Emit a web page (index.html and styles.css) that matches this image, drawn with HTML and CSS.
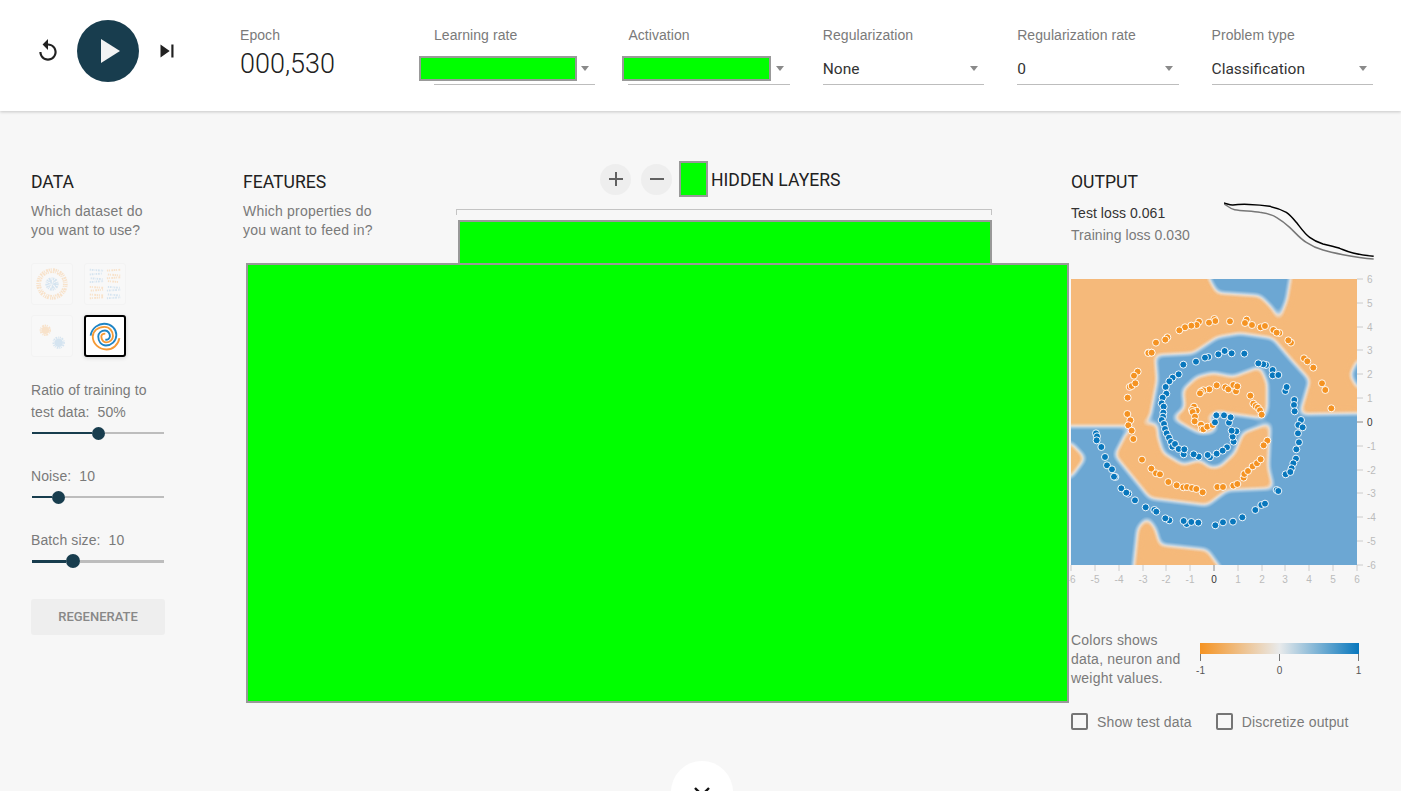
FILE: index.html
```html
<!DOCTYPE html>
<html lang="en">
<head>
<meta charset="utf-8">
<title>Tensorflow Playground</title>
<link rel="stylesheet" href="styles.css">
</head>
<body>
<header class="topbar">
  <div class="player">
    <svg class="icon-26" viewBox="0 0 24 24"><path d="M12 5V1L7 6l5 5V7c3.31 0 6 2.69 6 6s-2.69 6-6 6-6-2.69-6-6H4c0 4.42 3.58 8 8 8s8-3.58 8-8-3.58-8-8-8z"/></svg>
    <div class="play"><svg class="play-glyph" viewBox="0 0 19 24"><path d="M0 0v24l19-12z"/></svg></div>
    <svg class="icon-26" viewBox="0 0 24 24"><path d="M6 18l8.5-6L6 6v12zM16 6v12h2V6h-2z"/></svg>
  </div>
  <div class="epoch">
    <div class="label">Epoch</div>
    <div class="epoch-value">000,530</div>
  </div>
  <div class="selects">
    <div class="sel">
      <div class="label">Learning rate</div>
      <div class="sel-box"><div class="missing missing-lr"></div><span class="caret"></span></div>
    </div>
    <div class="sel">
      <div class="label">Activation</div>
      <div class="sel-box"><div class="missing missing-act"></div><span class="caret"></span></div>
    </div>
    <div class="sel">
      <div class="label">Regularization</div>
      <div class="sel-box"><span class="sel-text">None</span><span class="caret"></span></div>
    </div>
    <div class="sel">
      <div class="label">Regularization rate</div>
      <div class="sel-box"><span class="sel-text">0</span><span class="caret"></span></div>
    </div>
    <div class="sel">
      <div class="label">Problem type</div>
      <div class="sel-box"><span class="sel-text">Classification</span><span class="caret"></span></div>
    </div>
  </div>
</header>

<main class="content">
  <section class="col-data">
    <h2 class="heading">DATA</h2>
    <p class="note">Which dataset do<br>you want to use?</p>
    <div class="thumbs">
      <div class="thumb"><svg class="thumb-svg" viewBox="0 0 42 42">
        <circle class="speck-o" cx="21" cy="21" r="15" stroke-width="3"/>
        <circle class="speck-o" cx="21" cy="21" r="12.5" stroke-width="2"/>
        <circle class="speck-b" cx="21" cy="21" r="5.5" stroke-width="3"/>
        <circle class="speck-b" cx="21" cy="21" r="2.5" stroke-width="4"/>
      </svg></div>
      <div class="thumb"><svg class="thumb-svg" viewBox="0 0 42 42">
        <path class="speck-b" stroke-width="2" d="M5 6l14 1M5 11l13-1M6 15l13 1M5 19l14-1"/>
        <path class="speck-o" stroke-width="2" d="M23 7l14-1M24 11l13 1M23 15l14-1M24 18l12 1"/>
        <path class="speck-o" stroke-width="2" d="M5 24l14 1M6 28l13-1M5 32l14 1M5 36l14-1"/>
        <path class="speck-b" stroke-width="2" d="M24 24l13 1M23 28l14-1M24 32l13 1M23 36l14-1"/>
      </svg></div>
      <div class="thumb"><svg class="thumb-svg" viewBox="0 0 42 42">
        <circle class="blob-o" cx="14" cy="15" r="4"/>
        <circle class="speck-o" cx="14" cy="15" r="5" stroke-width="2"/>
        <circle class="blob-b" cx="28" cy="28" r="4.5"/>
        <circle class="speck-b" cx="28" cy="28" r="5.5" stroke-width="2"/>
      </svg></div>
      <div class="thumb thumb-on"><svg class="thumb-svg" viewBox="253 466 124 124">
        <path class="sp-b" d="M268 527C272 500 295 488 312 488C338 488 352 508 352 525C352 545 335 559 318 559C302 559 293 545 293 530C293 518 303 510 315 510C325 510 331 520 331 529C331 536 324 541 316 540"/>
        <path class="sp-o" d="M362 535C358 558 340 572 320 572C295 572 275 553 275 530C275 512 292 498 313 498C330 498 341 512 341 528C341 540 330 549 318 549C310 549 303 540 303 530C303 524 309 520 316 520"/>
      </svg></div>
    </div>
    <div class="ctl ctl-first">Ratio of training to<br>test data:&nbsp; 50%</div>
    <div class="slider"><span class="fill" style="width:60px"></span><span class="knob"></span><span class="rest"></span></div>
    <div class="ctl">Noise:&nbsp; 10</div>
    <div class="slider"><span class="fill" style="width:20px"></span><span class="knob"></span><span class="rest"></span></div>
    <div class="ctl">Batch size:&nbsp; 10</div>
    <div class="slider slider-thick"><span class="fill" style="width:34px"></span><span class="knob knob-big"></span><span class="rest"></span></div>
    <div class="regen">REGENERATE</div>
  </section>

  <section class="col-mid">
    <div class="mid-top">
      <div class="features">
        <h2 class="heading">FEATURES</h2>
        <p class="note">Which properties do<br>you want to feed in?</p>
      </div>
      <div class="network">
        <div class="layer-ctl">
          <div class="round"><svg class="icon-24" viewBox="0 0 24 24"><path d="M19 13h-6v6h-2v-6H5v-2h6V5h2v6h6v2z"/></svg></div>
          <div class="round"><svg class="icon-24" viewBox="0 0 24 24"><path d="M19 13H5v-2h14v2z"/></svg></div>
          <div class="missing missing-num"></div>
          <span class="layers-title">HIDDEN LAYERS</span>
        </div>
        <div class="bracket"></div>
        <div class="missing missing-hidden"></div>
      </div>
    </div>
    <div class="missing missing-main"></div>
  </section>

  <section class="col-out">
    <h2 class="heading">OUTPUT</h2>
    <div class="loss-row">
      <div class="loss-text">
        <div class="loss-test">Test loss 0.061</div>
        <div class="loss-train">Training loss 0.030</div>
      </div>
      <svg class="loss-chart" viewBox="493 129 450 180">
        <path class="ln-train" d="M493 135C505 140 510 150 525 152C550 156 580 156 600 160C625 164 640 168 650 175C665 184 678 194 690 205C708 222 722 240 740 250C755 260 772 268 790 273C810 279 830 283 850 287C880 293 910 298 942 300"/>
        <path class="ln-test" d="M493 132C503 134 510 139 520 138C540 135 590 135 630 142C650 146 665 152 680 160C692 168 700 178 710 190C722 205 735 225 750 235C762 244 775 250 790 255C808 260 825 263 840 268C855 274 865 279 880 282C900 287 920 290 942 292"/>
      </svg>
    </div>

    <svg class="plot" viewBox="1071 279 303 311">
      <defs>
        <filter id="halo" x="-5%" y="-5%" width="110%" height="110%" color-interpolation-filters="sRGB">
          <feGaussianBlur stdDeviation="3.5"/>
          <feComponentTransfer><feFuncA type="linear" slope="2.4" intercept="-0.3"/></feComponentTransfer>
        </filter>
        <filter id="core" x="-5%" y="-5%" width="110%" height="110%" color-interpolation-filters="sRGB">
          <feGaussianBlur stdDeviation="3.5"/>
          <feComponentTransfer><feFuncA type="linear" slope="2.4" intercept="-0.95"/></feComponentTransfer>
        </filter>
        <g id="regions">
          <path d="M1055 265H1207L1209 279L1217 293L1260 296L1272 308L1279 320L1287 300L1292 270H1370V360H1357L1350 375L1357 388H1370V413L1300 414L1310 380L1290 358L1273 338L1240 333L1217 337L1193 353L1155 355L1157 380L1150 417L1140 426L1055 426Z"/>
          <path d="M1183 390L1197 377L1213 373L1233 377L1260 367L1267 383L1267 410L1262 418L1233 414L1217 411L1207 418L1217 427L1212 432L1200 433L1190 428L1173 418L1185 408Z"/>
          <path d="M1140 425L1157 423L1158 437L1163 453L1183 465L1200 460L1210 468L1220 467L1235 453L1243 433L1270 423L1268 467L1273 488L1227 490L1207 505L1150 498L1115 455L1127 432Z"/>
          <path d="M1133 575L1138 528L1147 518L1155 528L1160 545L1207 550L1225 575Z"/>
          <path d="M1055 443H1071L1085 458L1071 477H1055Z"/>
        </g>
      </defs>
      <svg x="1071" y="279" width="286" height="286" viewBox="1071 279 286 286">
        <rect class="hm-blue" x="1071" y="279" width="286" height="286"/>
        <use href="#regions" class="hm-pale" filter="url(#halo)"/>
        <use href="#regions" class="hm-orange" filter="url(#core)"/>
        <g transform="translate(1060 270) scale(.3333)" class="pts pts-o">
          <circle cx="463" cy="147"/><circle cx="466" cy="153"/><circle cx="447" cy="158"/><circle cx="417" cy="155"/><circle cx="410" cy="165"/><circle cx="394" cy="167"/><circle cx="375" cy="172"/><circle cx="358" cy="181"/><circle cx="322" cy="202"/><circle cx="316" cy="209"/><circle cx="288" cy="218"/><circle cx="274" cy="248"/><circle cx="265" cy="248"/><circle cx="510" cy="154"/><circle cx="560" cy="149"/><circle cx="555" cy="159"/><circle cx="576" cy="165"/><circle cx="602" cy="172"/><circle cx="615" cy="168"/><circle cx="640" cy="180"/><circle cx="658" cy="189"/><circle cx="650" cy="188"/><circle cx="693" cy="218"/><circle cx="685" cy="211"/><circle cx="732" cy="265"/><circle cx="742" cy="274"/><circle cx="760" cy="293"/><circle cx="786" cy="340"/><circle cx="796" cy="360"/><circle cx="814" cy="415"/>
        </g>
        <g transform="translate(1120 340) scale(.3333)" class="pts pts-o">
          <circle cx="85" cy="39"/><circle cx="95" cy="38"/><circle cx="53" cy="95"/><circle cx="42" cy="107"/><circle cx="29" cy="141"/><circle cx="35" cy="138"/><circle cx="46" cy="130"/><circle cx="23" cy="173"/><circle cx="22" cy="222"/><circle cx="31" cy="241"/><circle cx="25" cy="256"/><circle cx="35" cy="272"/><circle cx="40" cy="297"/><circle cx="66" cy="359"/><circle cx="94" cy="386"/><circle cx="108" cy="400"/><circle cx="120" cy="403"/><circle cx="145" cy="426"/><circle cx="170" cy="436"/><circle cx="190" cy="442"/><circle cx="201" cy="441"/><circle cx="216" cy="444"/><circle cx="229" cy="447"/><circle cx="292" cy="441"/><circle cx="309" cy="441"/><circle cx="340" cy="437"/><circle cx="352" cy="432"/><circle cx="371" cy="413"/><circle cx="373" cy="402"/><circle cx="384" cy="393"/><circle cx="398" cy="379"/><circle cx="411" cy="370"/><circle cx="422" cy="358"/><circle cx="442" cy="302"/><circle cx="431" cy="316"/>
          <circle cx="290" cy="136"/><circle cx="268" cy="148"/><circle cx="250" cy="151"/><circle cx="243" cy="155"/><circle cx="240" cy="160"/><circle cx="316" cy="142"/><circle cx="325" cy="148"/><circle cx="340" cy="135"/><circle cx="348" cy="154"/><circle cx="352" cy="139"/><circle cx="391" cy="167"/><circle cx="400" cy="191"/><circle cx="407" cy="198"/><circle cx="414" cy="203"/><circle cx="420" cy="211"/><circle cx="425" cy="224"/><circle cx="222" cy="200"/><circle cx="230" cy="212"/><circle cx="216" cy="210"/><circle cx="218" cy="216"/><circle cx="225" cy="230"/><circle cx="224" cy="244"/><circle cx="243" cy="254"/><circle cx="245" cy="267"/><circle cx="250" cy="268"/><circle cx="262" cy="260"/><circle cx="278" cy="255"/>
        </g>
        <g transform="translate(1060 425) scale(.3333)" class="pts pts-o"><circle cx="428" cy="202"/></g>
        <g transform="translate(1120 340) scale(.3333)" class="pts pts-b">
          <circle cx="295" cy="43"/><circle cx="314" cy="33"/><circle cx="335" cy="40"/><circle cx="373" cy="41"/><circle cx="265" cy="51"/><circle cx="255" cy="53"/><circle cx="228" cy="65"/><circle cx="190" cy="74"/><circle cx="176" cy="103"/><circle cx="158" cy="113"/><circle cx="148" cy="124"/><circle cx="137" cy="141"/><circle cx="139" cy="161"/><circle cx="128" cy="173"/><circle cx="125" cy="190"/><circle cx="131" cy="200"/><circle cx="130" cy="218"/><circle cx="129" cy="230"/><circle cx="125" cy="240"/><circle cx="132" cy="252"/><circle cx="135" cy="267"/><circle cx="140" cy="280"/><circle cx="147" cy="293"/><circle cx="153" cy="306"/><circle cx="157" cy="320"/><circle cx="165" cy="312"/><circle cx="176" cy="327"/><circle cx="191" cy="343"/><circle cx="193" cy="328"/><circle cx="236" cy="350"/><circle cx="221" cy="343"/><circle cx="270" cy="352"/><circle cx="263" cy="345"/><circle cx="290" cy="341"/><circle cx="321" cy="322"/><circle cx="308" cy="332"/><circle cx="341" cy="305"/><circle cx="338" cy="290"/><circle cx="349" cy="274"/><circle cx="335" cy="272"/><circle cx="327" cy="248"/><circle cx="332" cy="232"/><circle cx="289" cy="226"/><circle cx="312" cy="226"/><circle cx="285" cy="247"/>
          <circle cx="438" cy="75"/><circle cx="430" cy="73"/><circle cx="415" cy="70"/><circle cx="458" cy="90"/><circle cx="458" cy="106"/><circle cx="475" cy="105"/><circle cx="496" cy="153"/><circle cx="500" cy="141"/><circle cx="523" cy="180"/><circle cx="522" cy="195"/><circle cx="524" cy="214"/><circle cx="543" cy="240"/><circle cx="535" cy="255"/><circle cx="548" cy="262"/><circle cx="534" cy="280"/><circle cx="537" cy="307"/><circle cx="529" cy="328"/><circle cx="528" cy="356"/><circle cx="520" cy="370"/><circle cx="515" cy="385"/><circle cx="497" cy="403"/><circle cx="511" cy="396"/>
        </g>
        <g transform="translate(1060 425) scale(.3333)" class="pts pts-b">
          <circle cx="108" cy="25"/><circle cx="111" cy="34"/><circle cx="110" cy="46"/><circle cx="124" cy="66"/><circle cx="135" cy="96"/><circle cx="141" cy="121"/><circle cx="156" cy="133"/><circle cx="166" cy="156"/><circle cx="162" cy="155"/><circle cx="184" cy="190"/><circle cx="205" cy="206"/><circle cx="199" cy="203"/><circle cx="225" cy="226"/><circle cx="257" cy="247"/><circle cx="283" cy="255"/><circle cx="289" cy="260"/><circle cx="328" cy="286"/><circle cx="316" cy="280"/><circle cx="380" cy="297"/><circle cx="371" cy="288"/><circle cx="394" cy="291"/><circle cx="415" cy="293"/><circle cx="466" cy="301"/><circle cx="489" cy="292"/><circle cx="519" cy="290"/><circle cx="547" cy="277"/><circle cx="586" cy="255"/><circle cx="604" cy="240"/><circle cx="615" cy="236"/><circle cx="650" cy="195"/><circle cx="655" cy="198"/>
        </g>
      </svg>
      <g class="ticks">
        <path d="M1357 279h6M1357 303h6M1357 327h6M1357 350h6M1357 374h6M1357 398h6M1357 446h6M1357 470h6M1357 493h6M1357 517h6M1357 541h6M1357 565h6"/>
        <path d="M1071 565v6M1095 565v6M1119 565v6M1143 565v6M1166 565v6M1190 565v6M1238 565v6M1262 565v6M1285 565v6M1309 565v6M1333 565v6M1357 565v6"/>
      </g>
      <path class="tick-zero" d="M1357 422h6M1214 565v6"/>
      <g class="axis-r">
        <text x="1367" y="283">6</text><text x="1367" y="307">5</text><text x="1367" y="331">4</text><text x="1367" y="354">3</text><text x="1367" y="378">2</text><text x="1367" y="402">1</text><text class="axis-zero" x="1367" y="426">0</text><text x="1367" y="450">-1</text><text x="1367" y="474">-2</text><text x="1367" y="497">-3</text><text x="1367" y="521">-4</text><text x="1367" y="545">-5</text><text x="1367" y="569">-6</text>
      </g>
      <g class="axis-b">
        <text x="1071" y="583">-6</text><text x="1095" y="583">-5</text><text x="1119" y="583">-4</text><text x="1143" y="583">-3</text><text x="1166" y="583">-2</text><text x="1190" y="583">-1</text><text class="axis-zero" x="1214" y="583">0</text><text x="1238" y="583">1</text><text x="1262" y="583">2</text><text x="1285" y="583">3</text><text x="1309" y="583">4</text><text x="1333" y="583">5</text><text x="1357" y="583">6</text>
      </g>
    </svg>

    <div class="legend">
      <p class="note legend-text">Colors shows<br>data, neuron and<br>weight values.</p>
      <div class="scale">
        <div class="scale-bar"></div>
        <div class="scale-ticks"><span class="scale-tick"><i class="tick-mark"></i>-1</span><span class="scale-tick"><i class="tick-mark"></i>0</span><span class="scale-tick"><i class="tick-mark"></i>1</span></div>
      </div>
    </div>

    <div class="checks">
      <label class="check"><span class="box"></span>Show test data</label>
      <label class="check"><span class="box"></span>Discretize output</label>
    </div>
  </section>
</main>

<div class="more"><svg class="chev" viewBox="0 0 24 24"><path d="M5 4l7 7 7-7"/></svg></div>
</body>
</html>
```

FILE: styles.css
```css
* { box-sizing: border-box; }
html, body { margin: 0; height: 791px; overflow: hidden; }
body {
  position: relative;
  background: #f7f7f7;
  font-family: "Liberation Sans", Arial, sans-serif;
  font-size: 14px;
  color: #777;
}

/* top bar */
.topbar {
  display: flex;
  align-items: flex-start;
  height: 111px;
  background: #fff;
  box-shadow: 0 1px 3px rgba(0,0,0,.2);
  padding: 25px 0 0 35px;
}
.player { display: flex; align-items: center; gap: 16px; width: 205px; margin-top: -5px; }
.icon-26 { width: 26px; height: 26px; fill: #212121; flex: none; }
.play {
  width: 62px; height: 62px; border-radius: 50%;
  background: #183d4e;
  display: flex; align-items: center; justify-content: center;
  flex: none;
  margin-right: -1px;
}
.play-glyph { width: 19px; height: 24px; fill: #f3f3f3; margin-left: 5px; }
.epoch { width: 194px; }
.label { height: 20px; line-height: 20px; color: #7a7a7a; white-space: nowrap; letter-spacing: .06px; }
.epoch-value {
  margin-top: 7px;
  font: 300 27px/24px Roboto, sans-serif;
  color: #212121;
}
.selects { display: flex; gap: 33px; }
.sel { width: 161.4px; }
.sel-box {
  display: flex;
  height: 29px;
  margin-top: 11px;
  border-bottom: 1px solid #bdbdbd;
  align-items: center;
}
.sel-text { font: 15.5px/24px Roboto, sans-serif; color: #333; margin-top: -2px; }
.caret {
  width: 0; height: 0;
  margin: -3px 6px 0 auto;
  border-left: 4.5px solid transparent;
  border-right: 4.5px solid transparent;
  border-top: 5px solid #8a8a8a;
}
.missing { background: #0f0; border: 2px solid #999; }
.missing-lr { width: 158px; height: 25px; margin-left: -15px; align-self: flex-start; }
.missing-act { width: 149px; height: 25px; margin-left: -6.4px; align-self: flex-start; }

/* columns */
.content { display: flex; padding: 50px 0 0 31px; }
.heading {
  margin: 0;
  font: 400 17.6px/22px Roboto, sans-serif;
  color: #212121;
}
.note { margin: 9px 0 0; line-height: 19px; color: #7a7a7a; letter-spacing: .22px; white-space: nowrap; }

.col-data { width: 134px; padding-top: 10px; flex: none; margin-right: 78px; }
.thumbs {
  display: grid;
  grid-template-columns: 42px 42px;
  column-gap: 11px;
  row-gap: 10px;
  margin-top: 23px;
}
.thumb {
  width: 42px; height: 42px;
  border: 1px solid #f3f3f3;
  border-radius: 3px;
  background: #f8f8f8;
}
.thumb-on {
  border: 2px solid #000;
  background: #fff;
  box-shadow: 0 1px 4px rgba(0,0,0,.15);
}
.thumb-svg { display: block; width: 100%; height: 100%; fill: none; }
.speck-o { fill: none; stroke: #f8e2ca; stroke-dasharray: 1.5 .8 1 1.4 2 .7; }
.speck-b { fill: none; stroke: #d5e4f0; stroke-dasharray: 1.2 .9 1.8 1.2 .8 .7; }
.blob-o { fill: #f8e2ca; }
.blob-b { fill: #d5e4f0; }
.sp-b, .sp-o { fill: none; stroke-width: 6; }
.sp-b { stroke: #1f84c4; }
.sp-o { stroke: #f59a35; }

.ctl { margin-top: 25px; line-height: 22px; color: #7a7a7a; white-space: nowrap; letter-spacing: .1px; }
.ctl-first { margin-top: 22px; }
.slider { display: flex; align-items: center; height: 14px; margin: 3px 0 0 1px; width: 132px; }
.fill { height: 2px; background: #183d4e; flex: none; }
.rest { height: 2px; background: #bdbdbd; flex: 1; }
.slider-thick .fill, .slider-thick .rest { height: 3px; }
.knob { width: 13px; height: 13px; border-radius: 50%; background: #183d4e; flex: none; }
.knob-big { width: 14px; height: 14px; }
.regen {
  margin-top: 31px;
  height: 36px;
  text-align: center;
  background: #eee;
  border-radius: 3px;
  font: 500 13px/36px Roboto, sans-serif;
  color: #888;
}

.col-mid { width: 828px; flex: none; position: relative; z-index: 1; }
.mid-top { display: flex; height: 102px; }
.features { width: 213px; padding-top: 10px; flex: none; }
.network { width: 536px; flex: none; }
.layer-ctl { display: flex; align-items: center; height: 36px; margin-left: 144px; }
.round {
  width: 31px; height: 31px; border-radius: 50%;
  background: #eee;
  display: flex; align-items: center; justify-content: center;
  margin-right: 10px;
  flex: none;
}
.icon-24 { width: 24px; height: 24px; fill: #616161; }
.missing-num { width: 29px; height: 36px; margin: 0 3px 0 -3px; flex: none; }
.layers-title { font: 400 17.6px/36px Roboto, sans-serif; color: #212121; white-space: nowrap; margin-top: 2px; }
.bracket {
  height: 6px;
  margin-top: 12px;
  border: 1px solid #c4c4c4;
  border-bottom: 0;
}
.missing-hidden { width: 534px; height: 43px; margin: 5px 0 0 2px; border-bottom: 0; }
.missing-main { width: 823px; height: 440px; margin-left: 3px; }

.col-out { width: 303px; flex: none; padding-top: 10px; }
.loss-row { display: flex; margin-top: 9px; height: 60px; }
.loss-text { width: 153px; flex: none; line-height: 22px; letter-spacing: .06px; }
.loss-test { color: #333; white-space: nowrap; }
.loss-train { color: #7a7a7a; white-space: nowrap; }
.loss-chart { width: 150px; height: 60px; display: block; fill: none; }
.ln-test { stroke: #000; stroke-width: 4.5; fill: none; }
.ln-train { stroke: #777; stroke-width: 4.5; fill: none; }

.plot { display: block; width: 303px; height: 311px; margin-top: 17px; overflow: visible; }
.hm-blue { fill: #6ca7d3; }
.hm-pale { fill: #e6e9ec; }
.hm-orange { fill: #f5b97a; }
.pts circle { r: 10.5px; stroke: #fff; stroke-width: 2.8; }
.pts-o circle { fill: #f59322; }
.pts-b circle { fill: #0877bd; }
.ticks path { stroke: #ccc; stroke-width: 1; fill: none; }
.tick-zero { stroke: #888; stroke-width: 1; fill: none; }
.axis-r text, .axis-b text { font: 10px "Liberation Sans", Arial, sans-serif; fill: #bbb; }
.axis-b text { text-anchor: middle; }
.axis-r .axis-zero, .axis-b .axis-zero { fill: #333; }

.legend { display: flex; margin-top: 41px; }
.legend-text { margin: 0; width: 129px; flex: none; }
.scale { width: 159px; padding-top: 11.5px; }
.scale-bar {
  height: 11px;
  background: linear-gradient(to right, #f59322, #e8eaeb 50%, #0877bd);
}
.scale-ticks { display: flex; justify-content: space-between; }
.scale-tick {
  display: flex; flex-direction: column; align-items: center;
  width: 1px;
  font-size: 10px; line-height: 12px; color: #555;
}
.tick-mark { display: block; width: 1px; height: 7px; background: #777; flex: none; margin-bottom: 4px; }

.checks { display: flex; margin-top: 25px; }
.check { display: flex; align-items: center; gap: 9px; height: 17px; color: #7a7a7a; white-space: nowrap; margin-right: 24px; letter-spacing: .15px; }
.box { width: 17px; height: 17px; border: 2px solid #757575; border-radius: 2px; flex: none; }

.more {
  position: absolute;
  left: 671px; top: 761px;
  width: 62px; height: 62px;
  border-radius: 50%;
  background: #fff;
  display: flex; justify-content: center;
}
.chev { width: 24px; height: 24px; margin-top: 23px; fill: none; stroke: #111; stroke-width: 2.4; }
```
